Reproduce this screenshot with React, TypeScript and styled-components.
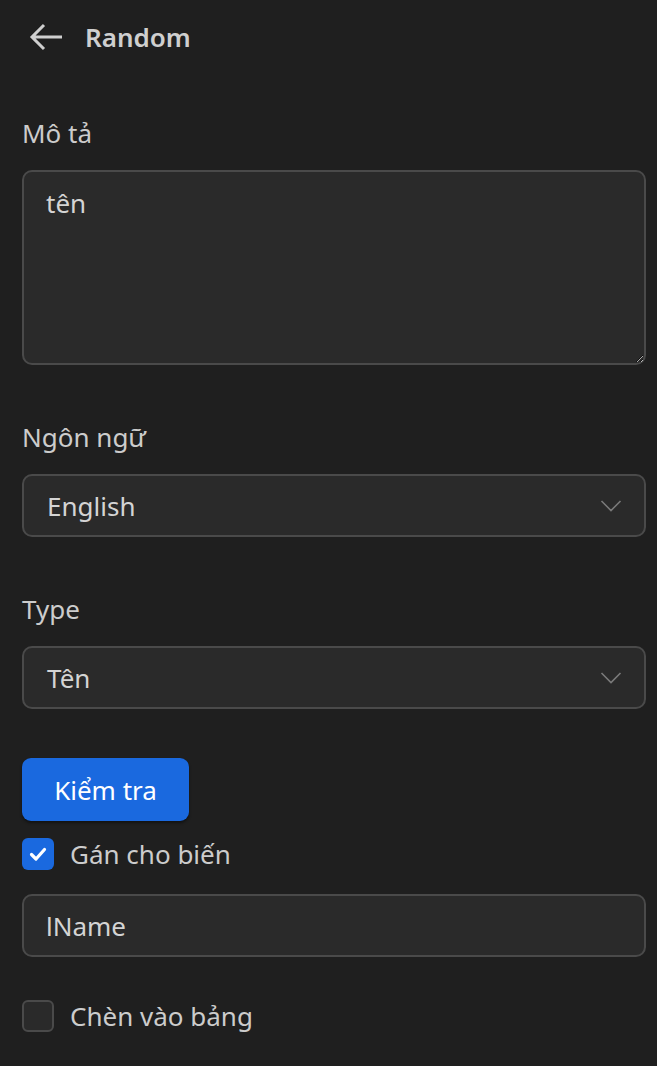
import React, { useState } from 'react'
import styled, { createGlobalStyle } from 'styled-components'

const GlobalStyle = createGlobalStyle`
    html, body {
        margin: 0;
        padding: 0;
        background: #1f1f1f;
    }
    body {
        font-family: "Noto Sans", "Open Sans", sans-serif;
        color: #cccccc;
    }
`

const Page = styled.div`
    width: 657px;
    min-height: 1066px;
    box-sizing: border-box;
    padding: 0 11px 0 22px;
    background: #1f1f1f;
    display: flex;
    flex-direction: column;
`

const Header = styled.div`
    height: 74px;
    display: flex;
    align-items: center;
    gap: 20px;
    padding-left: 5px;
`

const BackButton = styled.button`
    background: none;
    border: none;
    padding: 0;
    width: 38px;
    height: 38px;
    display: flex;
    align-items: center;
    justify-content: center;
    cursor: pointer;
`

const Title = styled.h1`
    margin: 0;
    font-size: 26px;
    font-weight: 600;
    color: #cfcfcf;
`

const Label = styled.div<{ $top: number }>`
    margin-top: ${p => p.$top}px;
    margin-bottom: 22px;
    height: 30px;
    line-height: 30px;
    font-size: 26px;
    color: #cccccc;
`

const TextArea = styled.textarea`
    color-scheme: dark;
    box-sizing: border-box;
    width: 100%;
    height: 195px;
    background: #2a2a2a;
    border: 2px solid #4a4a4a;
    border-radius: 10px;
    padding: 13px 22px;
    font-family: "Noto Sans", "Open Sans", sans-serif;
    font-size: 26px;
    color: #d4d4d4;
    resize: vertical;
    outline: none;
`

const SelectBox = styled.div`
    box-sizing: border-box;
    height: 63px;
    background: #2a2a2a;
    border: 2px solid #4a4a4a;
    border-radius: 10px;
    padding: 0 22px 0 23px;
    display: flex;
    align-items: center;
    justify-content: space-between;
    font-size: 26px;
    color: #d4d4d4;
    cursor: pointer;
`

const Chevron = () => (
    <svg width="22" height="14" viewBox="0 0 22 14" fill="none">
        <path d="M1.5 2 L11 11.5 L20.5 2" stroke="#7a7a7a" strokeWidth="1.6" />
    </svg>
)

const PrimaryButton = styled.button`
    margin-top: 49px;
    align-self: flex-start;
    width: 167px;
    height: 63px;
    background: #1a69df;
    border: none;
    border-radius: 9px;
    box-shadow: 0 2px 3px rgba(0, 0, 0, 0.45);
    color: #ffffff;
    font-family: "Noto Sans", "Open Sans", sans-serif;
    font-size: 26px;
    cursor: pointer;
`

const CheckRow = styled.label<{ $top: number }>`
    margin-top: ${p => p.$top}px;
    display: flex;
    align-items: center;
    gap: 16px;
    height: 32px;
    font-size: 26px;
    color: #cccccc;
    cursor: pointer;
`

const Box = styled.span<{ $checked: boolean }>`
    box-sizing: border-box;
    width: 32px;
    height: 32px;
    border-radius: 6px;
    display: flex;
    align-items: center;
    justify-content: center;
    background: ${p => (p.$checked ? '#1a69df' : '#2a2a2a')};
    border: ${p => (p.$checked ? 'none' : '2px solid #4a4a4a')};
`

const TextInput = styled.input`
    margin-top: 24px;
    box-sizing: border-box;
    width: 100%;
    height: 63px;
    background: #2a2a2a;
    border: 2px solid #4a4a4a;
    border-radius: 10px;
    padding: 0 22px;
    font-family: "Noto Sans", "Open Sans", sans-serif;
    font-size: 26px;
    color: #d4d4d4;
    outline: none;
`

const Checkbox = ({ checked, label, top, onToggle }: { checked: boolean; label: string; top: number; onToggle: () => void }) => (
    <CheckRow $top={top} onClick={onToggle}>
        <Box $checked={checked}>
            {checked && (
                <svg width="20" height="20" viewBox="0 0 20 20" fill="none">
                    <path d="M3.5 10.5 L8 15 L16.5 5.5" stroke="#ffffff" strokeWidth="3.2" strokeLinecap="round" strokeLinejoin="round" />
                </svg>
            )}
        </Box>
        {label}
    </CheckRow>
)

export default function App() {
    const [desc, setDesc] = useState('tên')
    const [varName, setVarName] = useState('lName')
    const [assign, setAssign] = useState(true) // gán cho biến
    const [insert, setInsert] = useState(false)

    return (
        <>
            <GlobalStyle />
            <Page>
                <Header>
                    <BackButton aria-label="back">
                        <svg width="34" height="30" viewBox="0 0 34 30" fill="none">
                            <path d="M33 15 H3 M15 3 L3 15 L15 27" stroke="#cfcfcf" strokeWidth="3" strokeLinejoin="miter" />
                        </svg>
                    </BackButton>
                    <Title>Random</Title>
                </Header>

                <Label $top={44}>Mô tả</Label>
                <TextArea value={desc} onChange={e => setDesc(e.target.value)} />

                <Label $top={57}>Ngôn ngữ</Label>
                <SelectBox>
                    English
                    <Chevron />
                </SelectBox>

                <Label $top={57}>Type</Label>
                <SelectBox>
                    Tên
                    <Chevron />
                </SelectBox>

                <PrimaryButton>Kiểm tra</PrimaryButton>

                <Checkbox checked={assign} label="Gán cho biến" top={17} onToggle={() => setAssign(!assign)} />
                <TextInput value={varName} onChange={e => setVarName(e.target.value)} />

                <Checkbox checked={insert} label="Chèn vào bảng" top={43} onToggle={() => setInsert(!insert)} />
            </Page>
        </>
    )
}
